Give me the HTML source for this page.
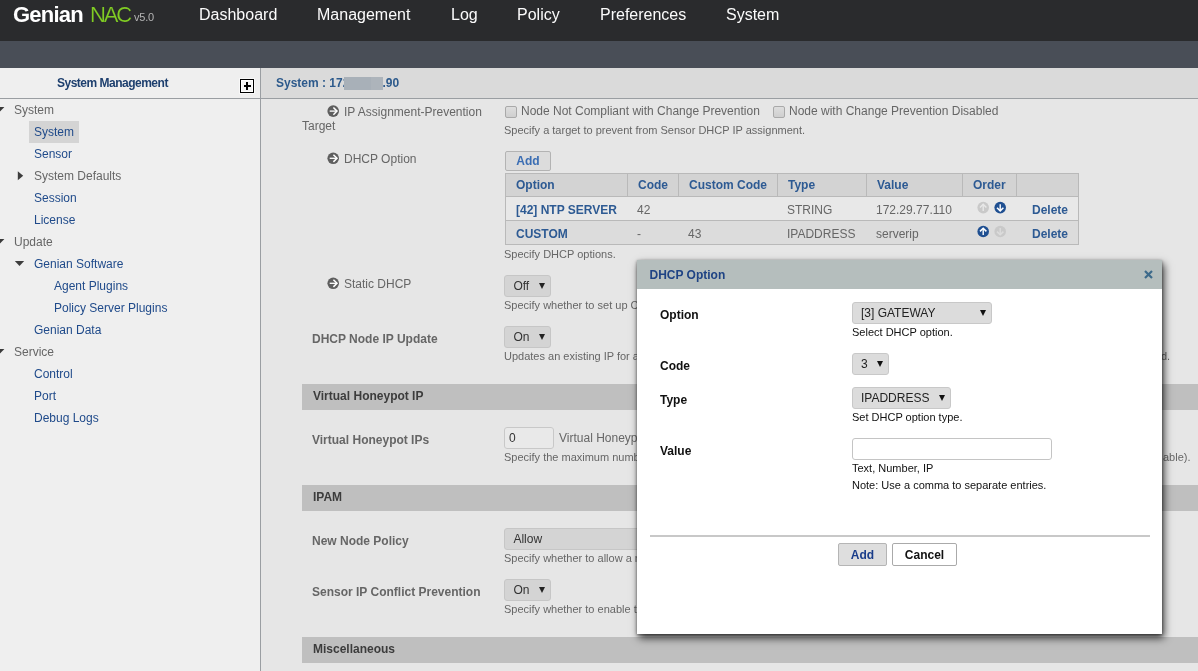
<!DOCTYPE html>
<html><head><meta charset="utf-8">
<style>
*{box-sizing:border-box}
html,body{margin:0;padding:0}
body{width:1198px;height:671px;overflow:hidden;position:relative;background:#e6e6e6;font-family:"Liberation Sans",sans-serif;font-size:12px;color:#666}
.a{position:absolute;white-space:nowrap}
.t{position:absolute;white-space:nowrap;line-height:14px}
#hdr{position:absolute;left:0;top:0;width:1198px;height:41px;background:#2a2b2d}
#sub{position:absolute;left:0;top:41px;width:1198px;height:27px;background:#494e57}
.nav{position:absolute;top:5px;font-size:16px;line-height:20px;color:#fbfbfb}
#side{position:absolute;left:0;top:68px;width:260px;height:603px;background:#efefef}
#sideline{position:absolute;left:260px;top:68px;width:1px;height:603px;background:#9a9ea2}
#hline{position:absolute;left:0;top:98px;width:1198px;height:1px;background:#9a9ea2}
#chdr{position:absolute;left:261px;top:68px;width:937px;height:30px;background:#dadada}
.lv{color:#1f4a8a}
.gr{color:#666}
.lbl{color:#666}
.blbl{color:#666;font-weight:bold}
.desc{font-size:11px;color:#666}
.sec{position:absolute;left:302px;width:896px;height:26px;background:#bfbfbf}
.sec span{position:absolute;left:11px;top:5px;font-weight:bold;color:#3c3c3c;line-height:14px}
.sel{position:absolute;height:22px;background:#d4d4d4;border:1px solid #c6c6c6;border-radius:3px;color:#333}
.sel .st{position:absolute;left:8.4px;top:3px;line-height:14px;font-size:12px}
.sel .ar{position:absolute;right:5px;top:7px;width:0;height:0;border-left:3px solid transparent;border-right:3px solid transparent;border-top:6px solid #222}
.cb{width:12px;height:12px;border:1px solid #a9a9a9;border-radius:2px;background:linear-gradient(#dedede,#cfcfcf)}
.btn{background:#dcdcdc;border:1px solid #b3b3b3;border-radius:2px}
.btn span{position:absolute;left:0;right:0;top:2px;text-align:center;font-weight:bold;color:#3a6db3;line-height:14px}
.vd{top:0;width:1px;height:24px;background:#b9b9b9}
.th{font-weight:bold;color:#2d5a93}
.td{color:#666}
.inp{background:#e9e9e9;border:1px solid #c8c8c8;border-radius:3px}
.inp span{position:absolute;left:4px;top:3px;line-height:14px;color:#333}
.m{position:absolute;white-space:nowrap;line-height:14px;color:#111}
.mb{font-weight:bold;color:#111}
.msel{position:absolute;height:22px;background:#dcdcdc;border:1px solid #c8c8c8;border-radius:3px;color:#222}
.msel .st{position:absolute;left:8px;top:3px;line-height:14px;font-size:12px}
.msel .ar{position:absolute;right:5px;top:7px;width:0;height:0;border-left:3px solid transparent;border-right:3px solid transparent;border-top:6px solid #111}
</style></head>
<body>
<div id="root" style="position:absolute;left:0;top:0;width:1198px;height:671px;overflow:hidden;will-change:transform">
<div id="hdr"></div>
<div id="sub"></div>
<!-- logo -->
<div class="a" style="left:13px;top:2px;font-size:22px;line-height:26px;font-weight:bold;color:#fff;letter-spacing:-0.8px">Genian</div>
<div class="a" style="left:90px;top:2px;font-size:22px;line-height:26px;color:#80cc24;letter-spacing:-2.1px;-webkit-text-stroke:0.15px #2a2b2d">NAC</div>
<div class="a" style="left:134px;top:11px;font-size:11px;line-height:13px;color:#b4b4b4;letter-spacing:-0.2px">v5.0</div>
<div class="nav" style="left:199px">Dashboard</div>
<div class="nav" style="left:317px">Management</div>
<div class="nav" style="left:451px">Log</div>
<div class="nav" style="left:517px">Policy</div>
<div class="nav" style="left:600px">Preferences</div>
<div class="nav" style="left:726px">System</div>

<div id="side"></div>
<div id="chdr"></div>
<div id="sideline"></div>
<div id="hline"></div>

<div class="t" style="left:57px;top:76px;font-weight:bold;color:#1d3f6e;letter-spacing:-0.5px">System Management</div>
<div class="a" style="left:239px;top:78px;width:16px;height:16px;border:1px solid rgba(255,255,255,0.55)"></div>
<div class="a" style="left:240px;top:79px;width:14px;height:14px;border:1px solid #000;background:#f4f4f4;box-shadow:inset 0 0 0 1px #fff"></div>
<div class="a" style="left:244px;top:85px;width:7px;height:2px;background:#000"></div>
<div class="a" style="left:246px;top:82px;width:2px;height:8px;background:#000"></div>

<div class="t" style="left:276px;top:76px;font-weight:bold;color:#2d5a8c">System : 172<span style="display:inline-block;width:33px"></span>.90</div>
<div class="a" style="left:344px;top:77px;width:39px;height:13px;background:#a8b0b8"></div><div class="a" style="left:371px;top:77px;width:12px;height:13px;background:#adb4bb"></div>

<!-- sidebar tree -->
<svg class="a" style="left:-5px;top:107px" width="11" height="7" viewBox="0 0 11 7"><polygon points="0,0 9.4,0 4.7,4.8" fill="#3a3a3a"/></svg>
<div class="t gr" style="left:14px;top:103px">System</div>
<div class="a" style="left:29px;top:121px;width:50px;height:22px;background:#d4d4d4"></div>
<div class="t lv" style="left:34px;top:125px">System</div>
<div class="t lv" style="left:34px;top:147px">Sensor</div>
<svg class="a" style="left:17px;top:170px" width="8" height="12" viewBox="0 0 8 12"><polygon points="0.8,1.2 6.2,5.8 0.8,10.3" fill="#3d3d3d"/></svg>
<div class="t gr" style="left:34px;top:169px">System Defaults</div>
<div class="t lv" style="left:34px;top:191px">Session</div>
<div class="t lv" style="left:34px;top:213px">License</div>
<svg class="a" style="left:-5px;top:239px" width="11" height="7" viewBox="0 0 11 7"><polygon points="0,0 9.4,0 4.7,4.8" fill="#3a3a3a"/></svg>
<div class="t gr" style="left:14px;top:235px">Update</div>
<svg class="a" style="left:14px;top:260px" width="12" height="8" viewBox="0 0 12 8"><polygon points="0.8,0.9 10.2,0.9 5.5,6" fill="#3d3d3d"/></svg>
<div class="t lv" style="left:34px;top:257px">Genian Software</div>
<div class="t lv" style="left:54px;top:279px">Agent Plugins</div>
<div class="t lv" style="left:54px;top:301px">Policy Server Plugins</div>
<div class="t lv" style="left:34px;top:323px">Genian Data</div>
<svg class="a" style="left:-5px;top:349px" width="11" height="7" viewBox="0 0 11 7"><polygon points="0,0 9.4,0 4.7,4.8" fill="#3a3a3a"/></svg>
<div class="t gr" style="left:14px;top:345px">Service</div>
<div class="t lv" style="left:34px;top:367px">Control</div>
<div class="t lv" style="left:34px;top:389px">Port</div>
<div class="t lv" style="left:34px;top:411px">Debug Logs</div>

<!-- CONTENT -->
<svg class="a" style="left:327px;top:105px" width="13" height="14" viewBox="0 0 13 14"><circle cx="6.2" cy="6.10" r="5.8" fill="#5e5e5e"/><path d="M2.7 6.10H9.4" stroke="#fff" stroke-width="1.3" fill="none"/><path d="M6.4 2.50L10 6.10L6.4 9.70" stroke="#fff" stroke-width="1.5" fill="none"/></svg>
<div class="t lbl" style="left:344px;top:105px">IP Assignment-Prevention</div>
<div class="t lbl" style="left:302px;top:119px">Target</div>
<div class="a cb" style="left:505px;top:106px"></div>
<div class="t lbl" style="left:521px;top:104px">Node Not Compliant with Change Prevention</div>
<div class="a cb" style="left:773px;top:106px"></div>
<div class="t lbl" style="left:789px;top:104px">Node with Change Prevention Disabled</div>
<div class="t desc" style="left:504px;top:123px">Specify a target to prevent from Sensor DHCP IP assignment.</div>

<svg class="a" style="left:327px;top:152px" width="13" height="14" viewBox="0 0 13 14"><circle cx="6.2" cy="6.30" r="5.8" fill="#5e5e5e"/><path d="M2.7 6.30H9.4" stroke="#fff" stroke-width="1.3" fill="none"/><path d="M6.4 2.70L10 6.30L6.4 9.90" stroke="#fff" stroke-width="1.5" fill="none"/></svg>
<div class="t lbl" style="left:344px;top:152px">DHCP Option</div>
<div class="a btn" style="left:505px;top:151px;width:46px;height:20px"><span>Add</span></div>

<div class="a" id="tbl" style="left:505px;top:173px;width:574px;height:72px">
 <div class="a" style="left:0;top:0;width:574px;height:24px;background:#d3d3d3;border:1px solid #b9b9b9"></div>
 <div class="a" style="left:0;top:23px;width:574px;height:25px;background:#e8e8e8;border:1px solid #b9b9b9"></div>
 <div class="a" style="left:0;top:47px;width:574px;height:25px;background:#dcdcdc;border:1px solid #b9b9b9"></div>
 <div class="a vd" style="left:122px"></div>
 <div class="a vd" style="left:173px"></div>
 <div class="a vd" style="left:272px"></div>
 <div class="a vd" style="left:361px"></div>
 <div class="a vd" style="left:457px"></div>
 <div class="a vd" style="left:511px"></div>
 <div class="t th" style="left:11px;top:5px">Option</div>
 <div class="t th" style="left:133px;top:5px">Code</div>
 <div class="t th" style="left:184px;top:5px">Custom Code</div>
 <div class="t th" style="left:283px;top:5px">Type</div>
 <div class="t th" style="left:372px;top:5px">Value</div>
 <div class="t th" style="left:468px;top:5px">Order</div>
 <div class="t th" style="left:11px;top:30px">[42] NTP SERVER</div>
 <div class="t td" style="left:132px;top:30px">42</div>
 <div class="t td" style="left:282px;top:30px">STRING</div>
 <div class="t td" style="left:371px;top:30px">172.29.77.110</div>
 <svg class="a" style="left:471px;top:28px" width="14" height="14" viewBox="0 0 14 14"><circle cx="7.20" cy="6.60" r="5.8" fill="#c9c9c9"/><path d="M7.20 10.00V3.50" stroke="#e8e8e8" stroke-width="1.4" fill="none"/><path d="M4.00 6.50L7.20 3.30L10.40 6.50" stroke="#e8e8e8" stroke-width="1.5" fill="none"/></svg>
 <svg class="a" style="left:488px;top:28px" width="14" height="14" viewBox="0 0 14 14"><circle cx="7.20" cy="6.60" r="5.8" fill="#1f4f91"/><path d="M7.20 3.20V9.70" stroke="#fff" stroke-width="1.4" fill="none"/><path d="M4.00 6.70L7.20 9.90L10.40 6.70" stroke="#fff" stroke-width="1.5" fill="none"/></svg>
 <svg class="a" style="left:471px;top:52px" width="14" height="14" viewBox="0 0 14 14"><circle cx="7.20" cy="6.50" r="5.8" fill="#1f4f91"/><path d="M7.20 9.90V3.40" stroke="#fff" stroke-width="1.4" fill="none"/><path d="M4.00 6.40L7.20 3.20L10.40 6.40" stroke="#fff" stroke-width="1.5" fill="none"/></svg>
 <svg class="a" style="left:488px;top:52px" width="14" height="14" viewBox="0 0 14 14"><circle cx="7.20" cy="6.50" r="5.8" fill="#c9c9c9"/><path d="M7.20 3.10V9.60" stroke="#dcdcdc" stroke-width="1.4" fill="none"/><path d="M4.00 6.60L7.20 9.80L10.40 6.60" stroke="#dcdcdc" stroke-width="1.5" fill="none"/></svg>
 <div class="t th" style="left:527px;top:30px">Delete</div>
 <div class="t th" style="left:11px;top:54px">CUSTOM</div>
 <div class="t td" style="left:132px;top:54px">-</div>
 <div class="t td" style="left:183px;top:54px">43</div>
 <div class="t td" style="left:282px;top:54px">IPADDRESS</div>
 <div class="t td" style="left:371px;top:54px">serverip</div>
 <div class="t th" style="left:527px;top:54px">Delete</div>
</div>
<div class="t desc" style="left:504px;top:247px">Specify DHCP options.</div>

<svg class="a" style="left:327px;top:277px" width="13" height="14" viewBox="0 0 13 14"><circle cx="6.2" cy="6.30" r="5.8" fill="#5e5e5e"/><path d="M2.7 6.30H9.4" stroke="#fff" stroke-width="1.3" fill="none"/><path d="M6.4 2.70L10 6.30L6.4 9.90" stroke="#fff" stroke-width="1.5" fill="none"/></svg>
<div class="t lbl" style="left:344px;top:277px">Static DHCP</div>
<div class="sel" style="left:504px;top:275px;width:47px"><span class="st">Off</span><span class="ar"></span></div>
<div class="t desc" style="left:504px;top:298px">Specify whether to set up Conflict static IP for a node on the Sensor. Node must be set static IP.</div>

<div class="t blbl" style="left:312px;top:332px">DHCP Node IP Update</div>
<div class="sel" style="left:504px;top:326px;width:47px"><span class="st">On</span><span class="ar"></span></div>
<div class="t desc" style="left:504px;top:349px">Updates an existing IP for a node when the IP address of a DHCP node is changed to a new IP address. Enabling is recommended.</div>

<div class="t desc" style="left:1161px;top:349px">d.</div>
<div class="sec" style="top:384px"><span>Virtual Honeypot IP</span></div>
<div class="t blbl" style="left:312px;top:433px">Virtual Honeypot IPs</div>
<div class="a inp" style="left:504px;top:427px;width:50px;height:22px"><span>0</span></div>
<div class="t lbl" style="left:559px;top:431px">Virtual Honeypot IPs</div>
<div class="t desc" style="left:504px;top:450px">Specify the maximum number of virtual honeypot IPs to be created per network (default: 0, 0: disable).</div>

<div class="t desc" style="left:1163px;top:450px">able).</div>
<div class="sec" style="top:485px"><span>IPAM</span></div>
<div class="t blbl" style="left:312px;top:534px">New Node Policy</div>
<div class="sel" style="left:504px;top:528px;width:300px"><span class="st">Allow</span></div>
<div class="t desc" style="left:504px;top:551px">Specify whether to allow a new node.</div>
<div class="t blbl" style="left:312px;top:585px">Sensor IP Conflict Prevention</div>
<div class="sel" style="left:504px;top:579px;width:47px"><span class="st">On</span><span class="ar"></span></div>
<div class="t desc" style="left:504px;top:602px">Specify whether to enable the IP conflict prevention.</div>

<div class="sec" style="top:637px"><span>Miscellaneous</span></div>

<!-- MODAL -->
<div class="a" style="left:637px;top:260px;width:525px;height:374px;background:#fff;box-shadow:0 1px 3px rgba(0,0,0,0.45),2px 4px 8px rgba(0,0,0,0.75)">
 <div class="a" style="left:0;top:0;width:525px;height:28.5px;background:#b5bebd"></div>
 <div class="t" style="left:12.5px;top:8px;font-weight:bold;color:#1e4384">DHCP Option</div>
 <svg class="a" style="left:507px;top:10px" width="9" height="9" viewBox="0 0 9 9"><path d="M1 1L8 8M8 1L1 8" stroke="#3d6a8a" stroke-width="2.2"/></svg>
 <div class="m mb" style="left:23px;top:48px">Option</div>
 <div class="msel" style="left:215px;top:42px;width:140px"><span class="st">[3] GATEWAY</span><span class="ar"></span></div>
 <div class="m" style="left:215px;top:65px;font-size:11px">Select DHCP option.</div>
 <div class="m mb" style="left:23px;top:99px">Code</div>
 <div class="msel" style="left:215px;top:93px;width:37px"><span class="st">3</span><span class="ar"></span></div>
 <div class="m mb" style="left:23px;top:133px">Type</div>
 <div class="msel" style="left:215px;top:127px;width:99px"><span class="st">IPADDRESS</span><span class="ar"></span></div>
 <div class="m" style="left:215px;top:150px;font-size:11px">Set DHCP option type.</div>
 <div class="m mb" style="left:23px;top:184px">Value</div>
 <div class="a" style="left:215px;top:178px;width:200px;height:22px;background:#fff;border:1px solid #c4c4c4;border-radius:3px"></div>
 <div class="m" style="left:215px;top:201px;font-size:11px">Text, Number, IP</div>
 <div class="m" style="left:215px;top:218px;font-size:11px">Note: Use a comma to separate entries.</div>
 <div class="a" style="left:13px;top:275px;width:500px;height:2px;background:#c8c8c8"></div>
 <div class="a" style="left:201px;top:283px;width:49px;height:23px;background:#dedede;border:1px solid #b5b5b5;border-radius:2px"><span class="a" style="left:0;right:0;top:4px;text-align:center;font-weight:bold;color:#1a3d8a;line-height:14px">Add</span></div>
 <div class="a" style="left:255px;top:283px;width:65px;height:23px;background:#fff;border:1px solid #aaa;border-radius:2px"><span class="a" style="left:0;right:0;top:4px;text-align:center;font-weight:bold;color:#111;line-height:14px">Cancel</span></div>
</div>
</div>
</body></html>
